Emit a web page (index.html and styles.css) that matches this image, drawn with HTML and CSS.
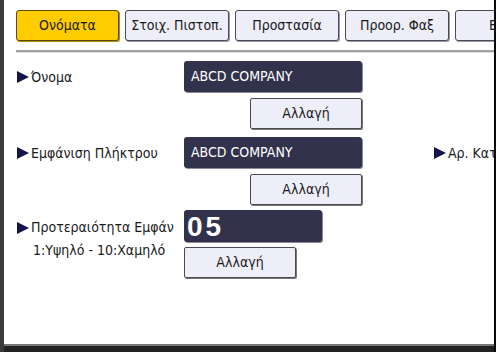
FILE: index.html
```html
<!DOCTYPE html>
<html lang="el">
<head>
<meta charset="utf-8">
<link rel="stylesheet" href="styles.css">
</head>
<body>
<div class="screen">
  <div class="main">
    <div class="tabs">
      <div class="tab tab-active">Ονόματα</div>
      <div class="tab">Στοιχ. Πιστοπ.</div>
      <div class="tab">Προστασία</div>
      <div class="tab">Προορ. Φαξ</div>
      <div class="tab tab-cut">Βασικό</div>
    </div>
    <div class="sep"></div>
    <div class="row row-1">
      <div class="label"><span class="arrow"></span>Όνομα</div>
      <div class="controls">
        <div class="field">ABCD COMPANY</div>
        <div class="btn">Αλλαγή</div>
      </div>
    </div>
    <div class="row row-2">
      <div class="label"><span class="arrow"></span>Εμφάνιση Πλήκτρου</div>
      <div class="controls">
        <div class="field">ABCD COMPANY</div>
        <div class="btn">Αλλαγή</div>
      </div>
      <div class="label label-right"><span class="arrow"></span>Αρ. Καταχώρησης</div>
    </div>
    <div class="row row-3">
      <div class="label label-stack">
        <div><span class="arrow"></span>Προτεραιότητα Εμφάν</div>
        <div class="sub">1:Υψηλό - 10:Χαμηλό</div>
      </div>
      <div class="controls controls-left">
        <div class="field field-num">05</div>
        <div class="btn">Αλλαγή</div>
      </div>
    </div>
  </div>
  <div class="bottom"></div>
</div>
</body>
</html>
```
FILE: styles.css
```css
* { box-sizing: border-box; }
html, body { margin: 0; padding: 0; background: #000; }
body {
  font-family: "DejaVu Sans Condensed", "Liberation Sans", sans-serif;
  font-size: 14px;
  color: #1a1a1a;
}
.screen {
  width: 496px;
  height: 352px;
  display: flex;
  flex-direction: column;
  background: #fff;
  border-left: 4px solid #3a3a3a;
  border-right: 2px solid #0a0a0a;
  overflow: hidden;
}
.main {
  flex: 1;
  padding: 10px 0 0 12px;
  overflow: hidden;
}
.tabs {
  display: flex;
  gap: 6px;
  height: 31px;
  white-space: nowrap;
}
.tab {
  flex: 0 0 104px;
  height: 31px;
  line-height: 29px;
  text-align: center;
  background: #eeeef8;
  border: 1px solid #4a4a55;
  border-radius: 3px;
  box-shadow: 1px 1px 0 #9a9aa8;
  font-size: 14px;
  overflow: hidden;
}
.tab-active {
  flex-basis: 103px;
  background: #ffcc00;
  border-color: #5a4a10;
  box-shadow: 1px 1px 0 #b08c00;
}
.tab-cut {
  flex-basis: 104px;
  text-align: left;
  padding-left: 33px;
}
.sep {
  margin-top: 9px;
  height: 3px;
  border-top: 2px solid #a0a0a0;
  border-bottom: 1px solid #e0e0e0;
}
.row {
  display: flex;
  align-items: flex-start;
  white-space: nowrap;
}
.row-1 { margin-top: 8px; }
.row-2 { margin-top: 8px; }
.row-3 { margin-top: 5px; }
.label {
  flex: 0 0 168px;
  width: 168px;
  height: 31px;
  display: flex;
  align-items: center;
  font-size: 14px;
}
.label-stack {
  display: block;
  height: auto;
  padding-top: 7px;
  line-height: 21px;
}
.label-stack > div:first-child { display: flex; align-items: center; }
.sub { padding-left: 17px; margin-top: 2px; }
.arrow {
  display: inline-block;
  flex: 0 0 auto;
  width: 0;
  height: 0;
  border-top: 6px solid transparent;
  border-bottom: 6px solid transparent;
  border-left: 12px solid #15154a;
  margin: 0 2px 0 1px;
}
.controls {
  flex: 0 0 178px;
  width: 178px;
  display: flex;
  flex-direction: column;
  align-items: flex-end;
  gap: 6px;
}
.controls-left { align-items: flex-start; gap: 5px; }
.field {
  width: 178px;
  height: 31px;
  line-height: 31px;
  padding-left: 7px;
  background: #32324c;
  color: #fff;
  border-radius: 3px;
  box-shadow: 1px 1px 0 #8a8a9a;
  font-size: 14px;
}
.field-num {
  width: 138px;
  height: 32px;
  line-height: 33px;
  padding-left: 3px;
  font-family: "Liberation Sans", "DejaVu Sans", sans-serif;
  font-weight: bold;
  font-size: 28px;
  letter-spacing: 3px;
}
.btn {
  width: 112px;
  height: 31px;
  line-height: 29px;
  text-align: center;
  background: #eeeef8;
  border: 1px solid #4a4a55;
  border-radius: 2px;
  box-shadow: 1px 1px 0 #777;
  font-size: 14px;
}
.label-right {
  flex: 0 0 auto;
  width: auto;
  margin-left: 71px;
}
.bottom {
  height: 8px;
  border-top: 2px solid #777;
  background: #222;
}
```
